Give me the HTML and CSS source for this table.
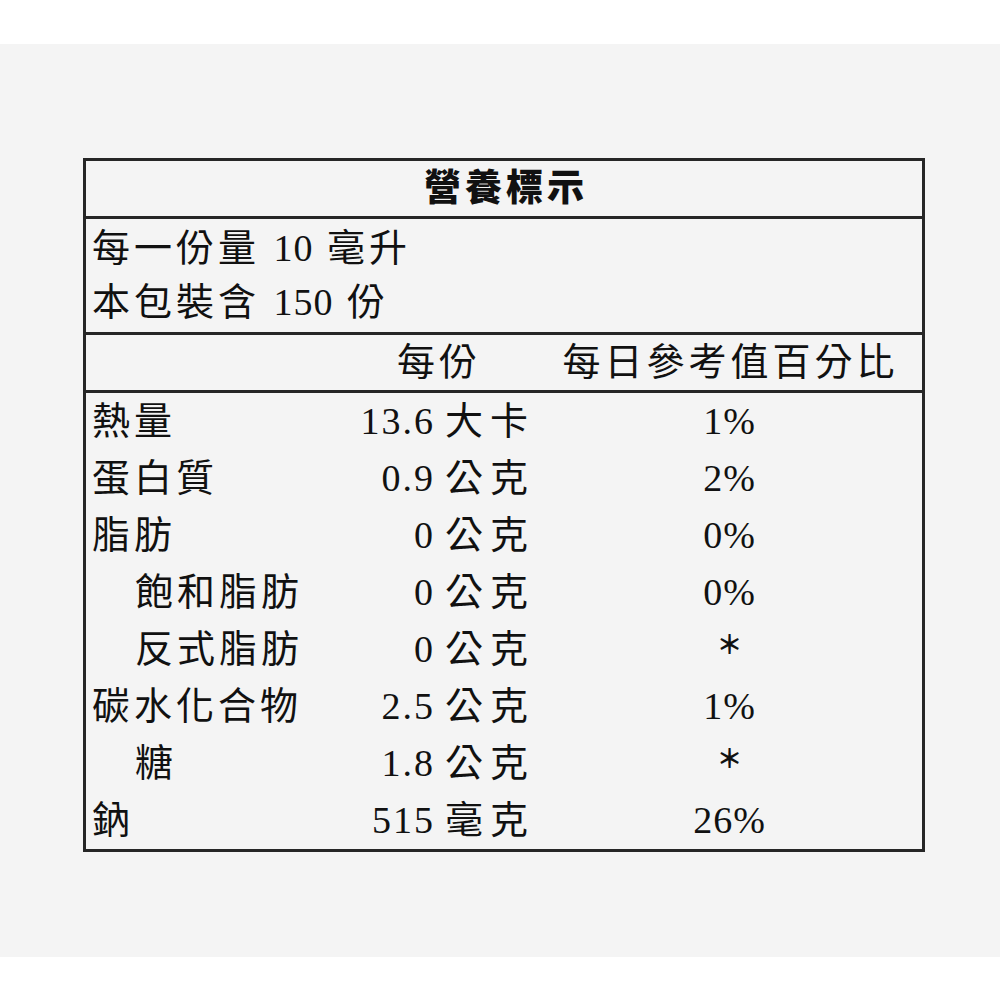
FILE: index.html
```html
<!DOCTYPE html>
<html lang="zh-Hant">
<head>
<meta charset="utf-8">
<title>營養標示</title>
<link rel="stylesheet" href="styles.css">
</head>
<body>
<div class="band">
  <div class="label">
    <div class="title">營養標示</div>
    <div class="serving">
      <div class="sline">每一份量 <span class="num">10</span> 毫升</div>
      <div class="sline">本包裝含 <span class="num">150</span> 份</div>
    </div>
    <div class="row head">
      <div class="name"></div>
      <div class="val hval">每份</div>
      <div class="pct hpct">每日參考值百分比</div>
    </div>
    <div class="rows">
      <div class="row"><div class="name">熱量</div><div class="val"><span class="num">13.6</span><span class="unit">大卡</span></div><div class="pct">1%</div></div>
      <div class="row"><div class="name">蛋白質</div><div class="val"><span class="num">0.9</span><span class="unit">公克</span></div><div class="pct">2%</div></div>
      <div class="row"><div class="name">脂肪</div><div class="val"><span class="num">0</span><span class="unit">公克</span></div><div class="pct">0%</div></div>
      <div class="row"><div class="name sub">飽和脂肪</div><div class="val"><span class="num">0</span><span class="unit">公克</span></div><div class="pct">0%</div></div>
      <div class="row"><div class="name sub">反式脂肪</div><div class="val"><span class="num">0</span><span class="unit">公克</span></div><div class="pct star">＊</div></div>
      <div class="row"><div class="name">碳水化合物</div><div class="val"><span class="num">2.5</span><span class="unit">公克</span></div><div class="pct">1%</div></div>
      <div class="row"><div class="name sub">糖</div><div class="val"><span class="num">1.8</span><span class="unit">公克</span></div><div class="pct star">＊</div></div>
      <div class="row"><div class="name">鈉</div><div class="val"><span class="num">515</span><span class="unit">毫克</span></div><div class="pct">26%</div></div>
    </div>
  </div>
</div>
</body>
</html>
```

FILE: styles.css
```css
html, body {
  margin: 0;
  padding: 0;
  background: #ffffff;
}

body {
  font-family: "Liberation Serif", "Noto Sans CJK TC", serif;
  color: #111111;
}

.band {
  margin-top: 44px;
  height: 913px;
  background: #f4f4f4;
  padding: 114px 0 0 83px;
  box-sizing: border-box;
}

.label {
  width: 842px;
  box-sizing: border-box;
  border: 3px solid #262626;
  font-size: 38px;
  font-weight: 400;
  letter-spacing: 4px;
}

.title {
  height: 55px;
  line-height: 55px;
  text-align: center;
  font-size: 37px;
  font-weight: 900;
  letter-spacing: 4px;
  padding-left: 4px;
  border-bottom: 3px solid #262626;
}

.serving {
  padding: 2px 0 3px 6px;
  border-bottom: 3px solid #262626;
}

.sline {
  height: 54px;
  line-height: 54px;
  white-space: nowrap;
}

.num {
  letter-spacing: 2px;
}

.sline .num {
  letter-spacing: 1px;
}

.row {
  display: grid;
  grid-template-columns: 238px 207px 1fr;
  padding-left: 6px;
  height: 57px;
  line-height: 57px;
  white-space: nowrap;
}

.row.head {
  height: 55px;
  line-height: 55px;
  border-bottom: 3px solid #262626;
}

.val {
  text-align: right;
  padding-right: 2px;
}

.hval {
  padding-right: 56px;
}

.unit {
  margin-left: 10px;
  letter-spacing: 7px;
}

.pct {
  text-align: center;
  letter-spacing: 1px;
}

.hpct {
  letter-spacing: 4px;
  padding-left: 2px;
}

.star {
  font-size: 26px;
  font-weight: 700;
  letter-spacing: 0;
  line-height: 50px;
}

.name.sub {
  padding-left: 43px;
}
```
